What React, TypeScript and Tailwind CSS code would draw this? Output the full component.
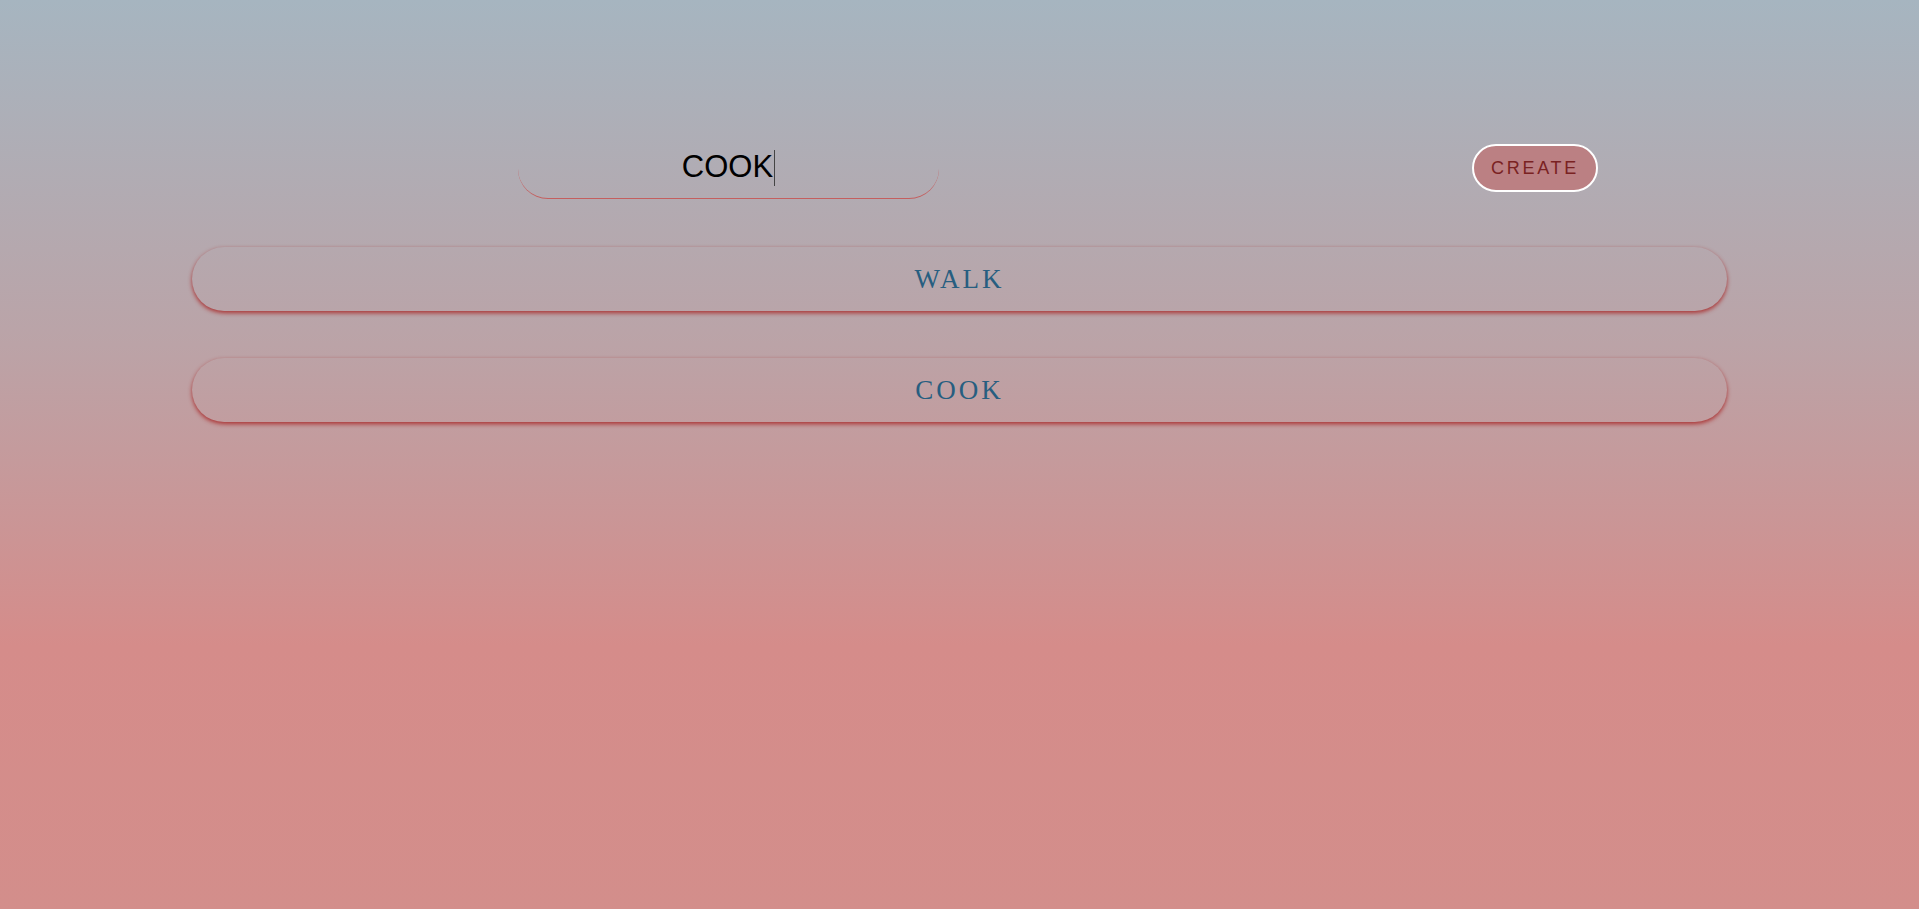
export default function App() {
  const tasks = ["WALK", "COOK"];

  return (
    <div className="min-h-screen w-full bg-[linear-gradient(to_bottom,#a6b5c0_0%,#bba3a7_38%,#d58c8a_71%,#d38e8b_100%)] font-['Liberation_Sans',Arial,sans-serif]">
      <form className="flex items-center justify-between pl-[518px] pr-[321px] pt-[137px]">
        <div className="flex h-[62px] w-[421px] items-center justify-center rounded-[30px] border-b border-[#c45f5f] text-[31px] text-black">
          <span>COOK</span>
          <span className="ml-px h-[36px] w-px bg-[#444]" />
        </div>
        <button
          type="button"
          className="h-[48px] w-[126px] rounded-full border-2 border-white bg-[#bb8083] text-[18px] tracking-[2.7px] text-[#7a2222]"
        >
          CREATE
        </button>
      </form>

      <ul className="mx-auto mt-[48px] flex w-[80%] flex-col gap-[47px]">
        {tasks.map((t) => (
          <li
            key={t}
            className="flex h-[64px] items-center justify-center rounded-full shadow-[0_2px_4px_rgba(170,45,45,0.95)] font-['Liberation_Serif','Times_New_Roman',serif] text-[27px] tracking-[3px] text-[#275e80]"
          >
            {t}
          </li>
        ))}
      </ul>
    </div>
  );
}
